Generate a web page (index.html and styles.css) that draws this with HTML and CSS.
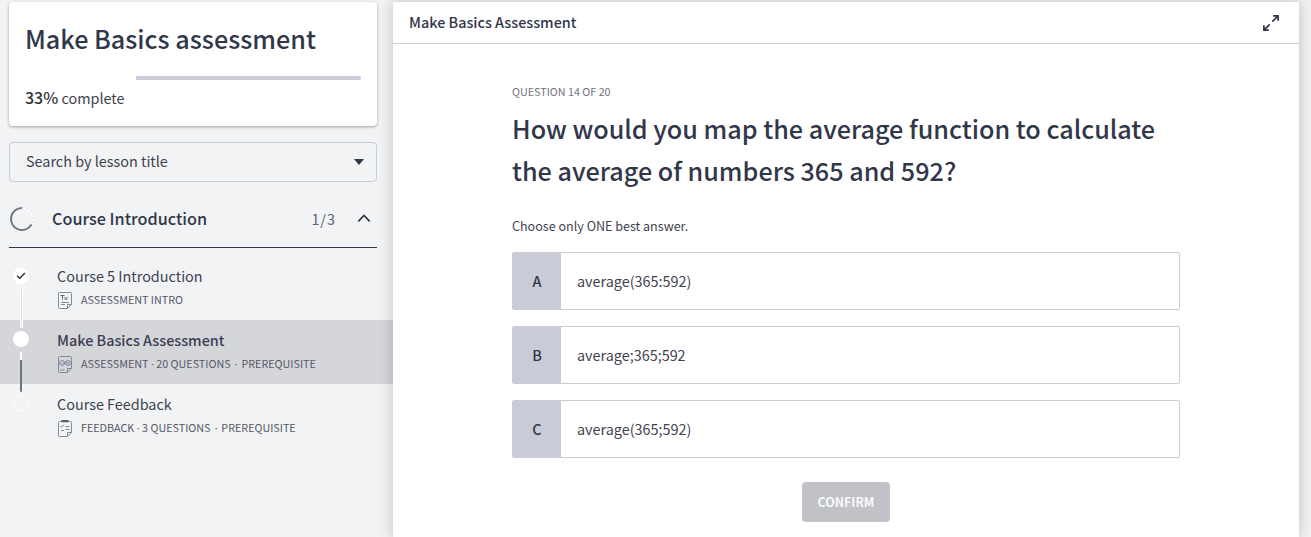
FILE: index.html
```html
<!DOCTYPE html>
<html lang="en">
<head>
<meta charset="utf-8">
<title>Make Basics assessment</title>
<link rel="stylesheet" href="styles.css">
</head>
<body>
<div class="app">
  <aside class="sidebar">
    <section class="course-card">
      <h1 class="course-title">Make Basics assessment</h1>
      <div class="progress"><div class="progress-done" style="width:33%"></div></div>
      <p class="progress-text"><b>33%</b> complete</p>
    </section>
    <div class="search">
      <span class="search-label">Search by lesson title</span>
      <svg width="10" height="6" viewBox="0 0 10 6"><path d="M0 0h10L5 6z" fill="#313749"/></svg>
    </div>
    <div class="section-head">
      <svg class="ring" width="26" height="26" viewBox="0 0 26 26" fill="none">
        <circle cx="13" cy="13" r="11" stroke="#fff" stroke-width="1.800"/>
        <path d="M13 2a11 11 0 1 0 9.500 16.500" stroke="#707384" stroke-width="2"/>
        <path d="M13 1.500a11.500 11.500 0 0 1 10 17" stroke="#b9bbc5" stroke-width=".6" stroke-dasharray="2 2"/>
      </svg>
      <h2 class="section-title">Course Introduction</h2>
      <span class="section-count">1/3</span>
      <svg width="14" height="9" viewBox="0 0 14 9" fill="none"><path d="M1.300 7.300 7 1.500l5.700 5.800" stroke="#313749" stroke-width="1.700"/></svg>
    </div>
    <ul class="lessons">
      <li class="lesson">
        <div class="track first">
          <span class="dot done"><svg width="10" height="8" viewBox="0 0 10 8" fill="none"><path d="M1 3.800 3.700 6.300 9 1" stroke="#313537" stroke-width="1.400"/></svg></span>
          <span class="line"></span>
        </div>
        <div class="lesson-body">
          <div class="lesson-title">Course 5 Introduction</div>
          <div class="meta">
            <svg width="14" height="17" viewBox="0 0 14 17" fill="none" stroke="#85879a" stroke-width="1"><path d="M1.500.5h11q1 0 1 1V12.500L9.500 16.500h-8q-1 0-1-1v-14q0-1 1-1zM9.500 16v-3.500h4M3 10.500h8M3 12.500h4"/><path d="M2.500 3.500h4M4.500 3.500v4M6.500 5l3 3M9.500 5l-3 3" stroke="#5d6071"/></svg>
            <span>ASSESSMENT INTRO</span>
          </div>
        </div>
      </li>
      <li class="lesson active">
        <div class="track">
          <span class="dot done"></span>
          <span class="line half"></span>
        </div>
        <div class="lesson-body">
          <div class="lesson-title current">Make Basics Assessment</div>
          <div class="meta">
            <svg width="14" height="17" viewBox="0 0 14 17" fill="none" stroke="#85879a" stroke-width="1"><path d="M1.500.5h11q1 0 1 1V12.500L9.500 16.500h-8q-1 0-1-1v-14q0-1 1-1zM9.500 16v-3.500h4M2.500 14h4"/><circle cx="4" cy="7" r="2.500"/><circle cx="10" cy="7" r="2.500"/><path d="m2.500 7 1.500 1L7 5.500 11.500 8.500M8.500 8.500l3-3" stroke-width=".8"/></svg>
            <span>ASSESSMENT<i class="sep"> · </i>20 QUESTIONS<i class="sep wide"> · </i>PREREQUISITE</span>
          </div>
        </div>
      </li>
      <li class="lesson">
        <div class="track"><span class="dot todo"></span></div>
        <div class="lesson-body">
          <div class="lesson-title next">Course Feedback</div>
          <div class="meta">
            <svg width="14" height="17" viewBox="0 0 14 17" fill="none" stroke="#85879a" stroke-width="1"><path d="M1.500 1.500h11q1 0 1 1V12.500L9.500 16.500h-8q-1 0-1-1v-13q0-1 1-1zM9.500 16v-3.500h4"/><path d="M3.500 0h7v2.300h-7z" fill="#5d6071" stroke="none"/><path d="m2.500 6 1.200 1.300L6 4.500M7.500 6.500h4M7.500 9.500h4M3 10.500h3"/></svg>
            <span>FEEDBACK<i class="sep"> · </i>3 QUESTIONS<i class="sep wide"> · </i>PREREQUISITE</span>
          </div>
        </div>
      </li>
    </ul>
  </aside>
  <main class="player">
    <header class="player-head">
      <h2 class="player-title">Make Basics Assessment</h2>
      <svg width="16" height="16" viewBox="0 0 16 16" fill="none" stroke="#313749" stroke-width="1.700"><path d="M9.300 6.700 14.800 1.200M10.200.9h4.900v4.900M6.700 9.300l-5.500 5.500M.9 10.200v4.900h4.900"/></svg>
    </header>
    <div class="quiz">
      <p class="counter">QUESTION 14 OF 20</p>
      <h3 class="question">How would you map the average function to calculate<br>the average of numbers 365 and 592?</h3>
      <p class="hint">Choose only ONE best answer.</p>
      <div class="answers">
        <div class="answer"><span class="letter">A</span><span class="text">average(365:592)</span></div>
        <div class="answer"><span class="letter">B</span><span class="text">average;365;592</span></div>
        <div class="answer"><span class="letter">C</span><span class="text">average(365;592)</span></div>
      </div>
      <button class="confirm">CONFIRM</button>
    </div>
  </main>
</div>
</body>
</html>
```
FILE: styles.css
```css
* { box-sizing: border-box; margin: 0; padding: 0; }
body {
  font-family: "Noto Sans CJK SC", "Noto Sans", sans-serif;
  color: #313749;
  background: #f1f3f5;
  overflow: hidden;
}
svg { display: block; flex: none; }
.app { display: flex; height: 537px; padding: 2px 12px 0 0; overflow: hidden; }

.sidebar { width: 393px; flex: none; }
.course-card {
  width: 368px; height: 124px; margin-left: 9px; padding: 18px 16px 0;
  background: #fff; border-radius: 4px;
  box-shadow: 0 1px 3px rgba(0,0,0,.35);
}
.course-title { font-size: 25.150px; font-weight: 500; line-height: 36px; white-space: nowrap; }
.progress { height: 4px; margin-top: 20px; background: #c9cbd6; border-radius: 2px; }
.progress-done { height: 4px; background: #fff; }
.progress-text { margin-top: 6px; font-size: 14.400px; line-height: 24px; color: #3f4350; }
.progress-text b { font-size: 16px; font-weight: 500; line-height: 1; color: #313537; }

.search {
  display: flex; align-items: center; justify-content: space-between;
  width: 368px; height: 40px; margin: 16px 0 0 9px; padding: 0 12px 0 16px;
  border: 1px solid #c9cbd6; border-radius: 4px;
}
.search-label { padding-bottom: 2px; font-size: 14.400px; line-height: 24px; color: #3f4350; }

.section-head {
  display: flex; align-items: center;
  width: 368px; height: 66px; margin-left: 9px; padding: 8px 6px 0 0;
  border-bottom: 1px solid #313749;
}
.section-title { margin-left: 17px; padding-bottom: 2px; font-size: 16.200px; font-weight: 500; line-height: 26px; flex: 1; }
.section-count { margin-right: 21px; font-size: 14.400px; letter-spacing: 1px; color: #5d6071; }

.lessons { list-style: none; padding-top: 8px; }
.lesson { display: flex; height: 64px; }
.lesson.active { background: #d5d6da; }
.track { display: flex; flex-direction: column; align-items: center; width: 16px; margin-left: 13px; padding-top: 11px; }
.track.first { padding-top: 12px; }
.dot { display: flex; align-items: center; justify-content: center; width: 16px; height: 16px; flex: none; border-radius: 50%; }
.dot.done { background: #fff; }
.dot.todo { border: 1px solid #fff; }
.line { width: 3px; height: 40px; margin: 4px 0 0 1px; flex: none; border: 1px solid #fff; border-radius: 1px; background: #dfe0e4; }
.line.half { width: 2px; margin: 5px 0 0; border: 0; background: linear-gradient(#fff 8px, #707384 8px); }
.lesson-body { margin-left: 28px; padding-top: 8px; }
.lesson-title { font-size: 14.400px; line-height: 24px; color: #3f4350; }
.lesson-title.current { font-weight: 500; color: #3b3e52; }
.meta { display: flex; align-items: center; gap: 9px; height: 24px; font-size: 10.750px; line-height: 16px; color: #555867; white-space: nowrap; }
.meta svg { margin-left: 1px; }
.sep { font-family: "Open Sans", sans-serif; font-style: normal; line-height: 1; word-spacing: -.300px; }
.sep.wide { margin: 0 1.400px 0 1.700px; }

.player { display: flex; flex-direction: column; width: 906px; height: 535px; background: #fff; box-shadow: 0 0 14px rgba(0,0,0,.22); }
.player-head { display: flex; align-items: center; justify-content: space-between; height: 42px; padding: 0 20px 0 16px; border-bottom: 1px solid #c9cbd6; }
.player-title { padding-bottom: 2px; font-size: 14.400px; font-weight: 500; line-height: 24px; }
.quiz { display: flex; flex-direction: column; width: 668px; margin-left: 119px; padding-top: 39px; }
.counter { font-size: 10.750px; line-height: 18px; color: #707380; }
.question { margin-top: 6px; font-size: 25.170px; font-weight: 500; line-height: 42px; white-space: nowrap; }
.hint { margin-top: 25px; font-size: 12.560px; line-height: 20px; color: #3f4350; }
.answers { display: flex; flex-direction: column; gap: 16px; margin-top: 16px; }
.answer { display: flex; align-items: center; height: 58px; border: 1px solid #c9cbd6; border-radius: 2px; }
.letter { width: 48px; height: 56px; line-height: 56px; text-align: center; font-size: 14.400px; font-weight: 500; background: #c9cbd6; }
.text { margin-left: 16px; padding-bottom: 2px; font-size: 14.400px; color: #3f4350; }
.confirm {
  align-self: center; width: 88px; height: 40px; margin-top: 24px;
  font: 700 12.400px/38px "Noto Sans CJK SC", sans-serif; color: #f8f9fa;
  background: #c1c2c8; border: 0; border-radius: 4px;
}
```
